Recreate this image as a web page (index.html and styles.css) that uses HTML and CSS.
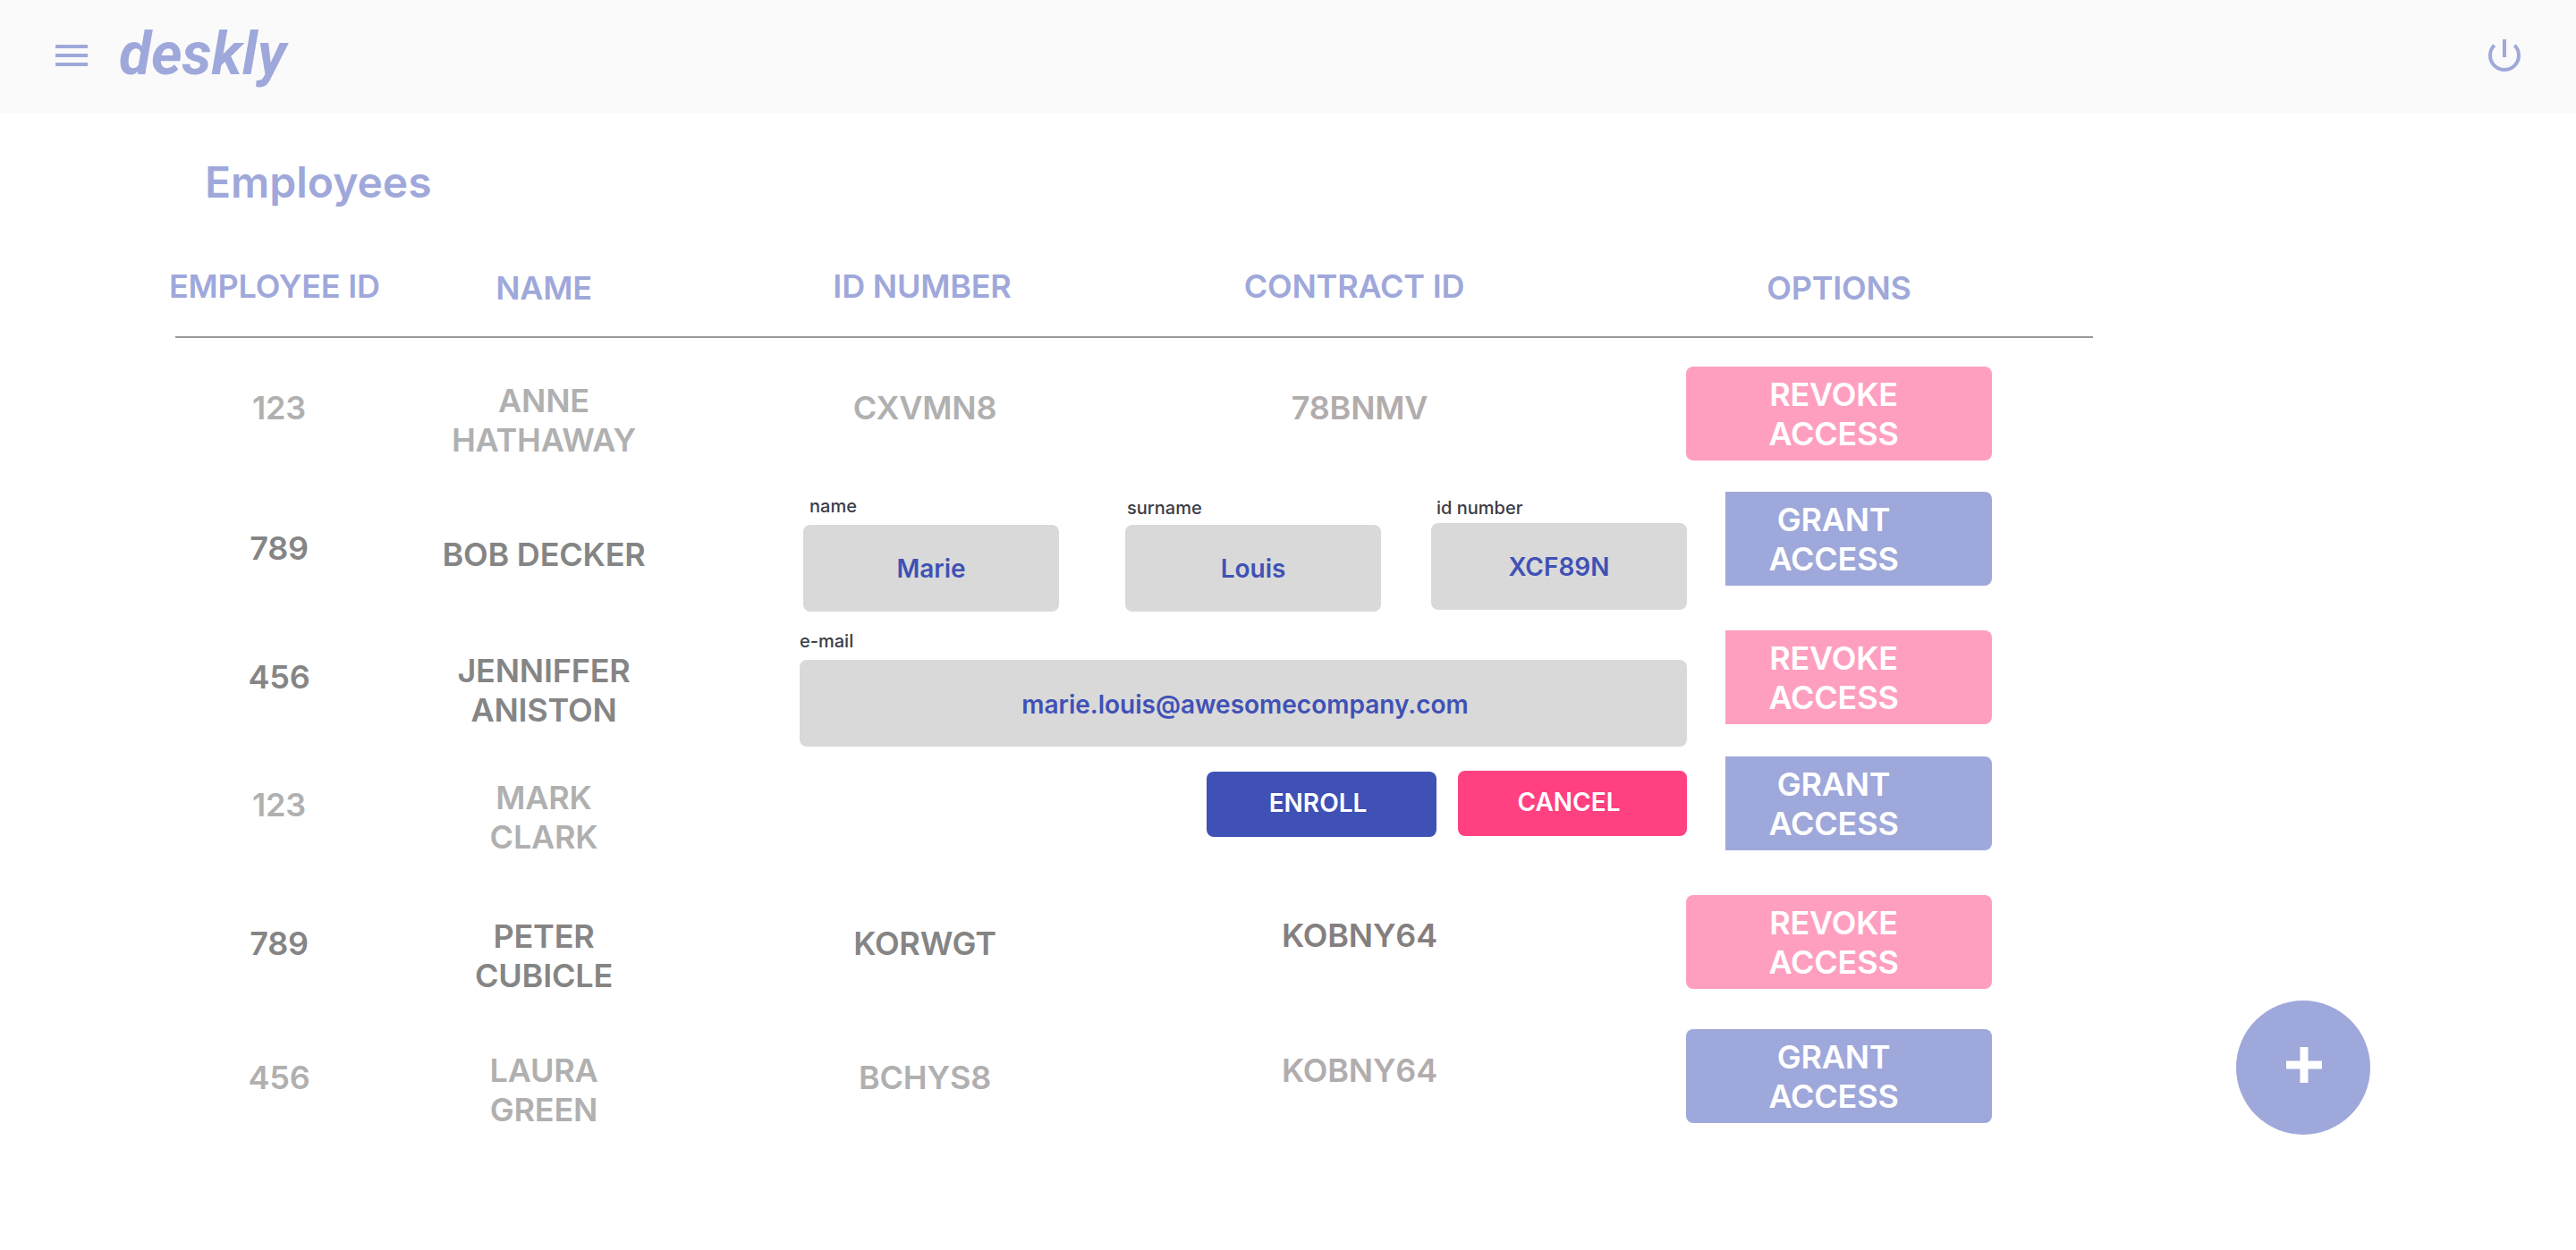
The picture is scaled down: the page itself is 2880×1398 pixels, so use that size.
FILE: index.html
```html
<!DOCTYPE html>
<html lang="en">
<head>
  <meta charset="UTF-8">
  <title>deskly - Employees</title>
  <link rel="stylesheet" href="styles.css">
</head>
<body>

<header class="topbar">
  <svg class="menu-icon" viewBox="0 0 36 24" aria-hidden="true">
    <rect x="0" y="0" width="36" height="4"/>
    <rect x="0" y="10" width="36" height="4"/>
    <rect x="0" y="20" width="36" height="4"/>
  </svg>
  <div class="logo">deskly</div>
  <svg class="power-icon" viewBox="0 0 36 36" aria-hidden="true">
    <path d="M6.7 6.7A16 16 0 1 0 29.3 6.7"/>
    <path d="M18 0V20"/>
  </svg>
</header>

<main class="content">
  <h1 class="title">Employees</h1>

  <div class="table">
    <div class="row row-head">
      <div class="cell cell-id">EMPLOYEE ID</div>
      <div class="cell cell-name">NAME</div>
      <div class="cell cell-num">ID NUMBER</div>
      <div class="cell cell-contract">CONTRACT ID</div>
      <div class="cell cell-opt">OPTIONS</div>
    </div>

    <div class="row row-1 muted">
      <div class="cell cell-id">123</div>
      <div class="cell cell-name">ANNE<br>HATHAWAY</div>
      <div class="cell cell-num">CXVMN8</div>
      <div class="cell cell-contract">78BNMV</div>
      <div class="cell cell-opt"><button class="access revoke">REVOKE<br>ACCESS</button></div>
    </div>

    <div class="row row-2">
      <div class="cell cell-id">789</div>
      <div class="cell cell-name">BOB DECKER</div>
      <div class="cell cell-num"></div>
      <div class="cell cell-contract"></div>
      <div class="cell cell-opt"><button class="access grant">GRANT<br>ACCESS</button></div>
    </div>

    <div class="row row-3">
      <div class="cell cell-id">456</div>
      <div class="cell cell-name">JENNIFFER<br>ANISTON</div>
      <div class="cell cell-num"></div>
      <div class="cell cell-contract"></div>
      <div class="cell cell-opt"><button class="access revoke">REVOKE<br>ACCESS</button></div>
    </div>

    <div class="row row-4 muted">
      <div class="cell cell-id">123</div>
      <div class="cell cell-name">MARK<br>CLARK</div>
      <div class="cell cell-num"></div>
      <div class="cell cell-contract"></div>
      <div class="cell cell-opt"><button class="access grant">GRANT<br>ACCESS</button></div>
    </div>

    <div class="row row-5">
      <div class="cell cell-id">789</div>
      <div class="cell cell-name">PETER<br>CUBICLE</div>
      <div class="cell cell-num">KORWGT</div>
      <div class="cell cell-contract">KOBNY64</div>
      <div class="cell cell-opt"><button class="access revoke">REVOKE<br>ACCESS</button></div>
    </div>

    <div class="row row-6 muted">
      <div class="cell cell-id">456</div>
      <div class="cell cell-name">LAURA<br>GREEN</div>
      <div class="cell cell-num">BCHYS8</div>
      <div class="cell cell-contract">KOBNY64</div>
      <div class="cell cell-opt"><button class="access grant">GRANT<br>ACCESS</button></div>
    </div>
  </div>
</main>

<!-- enroll form sits on top of rows 2-4 -->
<form class="enroll-panel">
  <div class="field-row">
    <div class="field field-first">
      <label>name</label>
      <div class="field-box">Marie</div>
    </div>
    <div class="field field-second">
      <label>surname</label>
      <div class="field-box">Louis</div>
    </div>
    <div class="field field-third">
      <label>id number</label>
      <div class="field-box">XCF89N</div>
    </div>
  </div>
  <div class="field field-email">
    <label>e-mail</label>
    <div class="field-box">marie.louis@awesomecompany.com</div>
  </div>
  <div class="panel-actions">
    <button type="button" class="panel-btn enroll">ENROLL</button>
    <button type="button" class="panel-btn cancel">CANCEL</button>
  </div>
</form>

<button class="fab" aria-label="Add employee">
  <svg viewBox="0 0 40 40" aria-hidden="true">
    <rect x="15.500" y="0" width="9" height="40"/>
    <rect x="0" y="15.500" width="40" height="9"/>
  </svg>
</button>

</body>
</html>
```

FILE: styles.css
```css
* {
  box-sizing: border-box;
}

body {
  margin: 0;
  background: white;
  font-family: "Inter", "Liberation Sans", sans-serif;
}

.topbar {
  height: 126px;
  background: #fafafa;
  display: flex;
  align-items: center;
  padding: 0 62px 2px;
}

.menu-icon {
  width: 36px;
  height: 24px;
  fill: #9fa8da;
}

.logo {
  margin: -2px 0 0 35px;
  font-family: "Roboto", sans-serif;
  font-style: italic;
  font-weight: 700;
  font-size: 66px;
  line-height: 76px;
  color: #9fa8da;
}

.power-icon {
  width: 36px;
  height: 36px;
  margin-left: auto;
  fill: none;
  stroke: #9fa8da;
  stroke-width: 4;
}

.content {
  padding: 49px 0 0 196px;
}

.title {
  margin: 0 0 65px 33px;
  font-size: 48px;
  line-height: 58px;
  font-weight: 600;
  color: #9fa8da;
}

.table {
  width: 2144px;
}

.row {
  display: grid;
  grid-template-columns: 232px 360px 492px 480px 580px;
  align-items: start;
  --id-top: 32px;
  --name-top: 24px;
  --contract-top: 24px;
  color: #858585;
}

.muted {
  color: #b0b0b0;
}

.cell {
  font-size: 36px;
  line-height: 44px;
  font-weight: 600;
  letter-spacing: -0.2px;
  text-align: center;
  white-space: nowrap;
}

.cell-id, .cell-num {
  padding-top: var(--id-top);
}

.cell-name {
  padding-top: var(--name-top);
}

.cell-contract {
  padding-top: var(--contract-top);
  color: #857f7f;
}

.muted .cell-contract {
  color: #b2adad;
}

.cell-opt {
  padding-left: 125px;
}

.row-head {
  height: 80px;
  margin-bottom: 32px;
  border-bottom: 2px solid #999;
  color: #9fa8da;
}

.row-head .cell-id {
  margin-left: -7px;
  padding: 0;
  text-align: left;
}

.row-head .cell-name {
  padding-top: 2px;
}

.row-head .cell-num {
  padding: 0 6px 0 0;
}

.row-head .cell-contract {
  padding: 0 12px 0 0;
  color: #9fa8da;
}

.row-head .cell-opt {
  padding-top: 2px;
  padding-right: 113px;
}

.row-1 {
  height: 140px;
  --id-top: 24px;
  --name-top: 16px;
  --contract-top: 24px;
}

.row-2 {
  height: 155px;
  --id-top: 41px;
  --name-top: 48px;
}

.row-3 {
  height: 141px;
  --id-top: 30px;
  --name-top: 23px;
}

.row-4 {
  height: 155px;
}

.row-5 {
  height: 150px;
  --contract-top: 23px;
}

.row-6 {
  height: 105px;
}

.access {
  display: block;
  width: 342px;
  height: 105px;
  padding: 0 12px 0 0;
  border: none;
  border-radius: 8px;
  font-family: inherit;
  font-size: 36px;
  line-height: 44px;
  font-weight: 600;
  letter-spacing: -0.2px;
  color: white;
}

.revoke {
  background: #ff9fbf;
}

.grant {
  background: #9fa8da;
}

.enroll-panel {
  position: absolute;
  left: 870px;
  top: 530px;
  width: 1059px;
  height: 440px;
  padding: 24px 43px 0 24px;
  background: white;
}

.field-row {
  display: flex;
  align-items: flex-start;
  padding-left: 4px;
}

.field label {
  display: block;
  height: 24px;
  font-size: 20px;
  line-height: 24px;
  font-weight: 500;
  color: #3c3c46;
}

.field-box {
  display: flex;
  align-items: center;
  justify-content: center;
  width: 286px;
  height: 97px;
  border-radius: 8px;
  background: #d9d9d9;
  font-size: 28px;
  font-weight: 600;
  color: #3f51b5;
}

.field-first label {
  margin: 0 0 9px 7px;
}

.field-second {
  margin: 2px 0 0 74px;
}

.field-second label {
  margin: 0 0 7px 2px;
}

.field-third {
  margin: 2px 0 0 56px;
}

.field-third label {
  margin: 0 0 5px 6px;
}

.field-email {
  margin-top: 21px;
}

.field-email label {
  margin-bottom: 9px;
}

.field-email .field-box {
  width: 992px;
  padding: 2px 0 0 4px;
}

.panel-actions {
  display: flex;
  align-items: flex-start;
  justify-content: flex-end;
  gap: 24px;
  margin-top: 27px;
}

.panel-btn {
  width: 256px;
  height: 73px;
  padding: 0 8px 4px 0;
  border: none;
  border-radius: 8px;
  font-family: inherit;
  font-size: 28px;
  font-weight: 600;
  color: white;
}

.enroll {
  width: 257px;
  margin-top: 1px;
  background: #3f51b5;
}

.cancel {
  background: #ff4081;
}

.fab {
  position: absolute;
  left: 2500px;
  top: 1119px;
  display: flex;
  align-items: center;
  justify-content: center;
  width: 150px;
  height: 150px;
  padding: 0 0 6px 1px;
  border: none;
  border-radius: 50%;
  background: #9fa8da;
}

.fab svg {
  width: 40px;
  height: 40px;
  fill: white;
}
```
